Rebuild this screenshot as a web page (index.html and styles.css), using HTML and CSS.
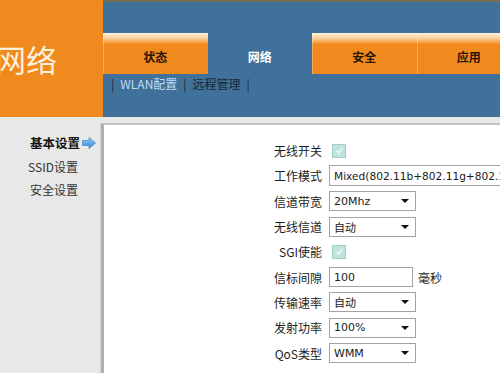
FILE: index.html
```html
<!DOCTYPE html>
<html lang="zh">
<head>
<meta charset="utf-8">
<title>网络</title>
<link rel="stylesheet" href="styles.css">
</head>
<body>
<div class="page">
  <header class="header">
    <div class="logo"><span class="logo-text">网络</span></div>
    <div class="nav">
      <div class="tabs">
        <div class="tab"><span>状态</span></div>
        <div class="tab active"><span>网络</span></div>
        <div class="tab"><span>安全</span></div>
        <div class="tab"><span>应用</span></div>
      </div>
      <div class="subnav">
        <span class="pipe">|</span><span class="sub current">WLAN配置</span><span class="pipe">|</span><span class="sub">远程管理</span><span class="pipe">|</span>
      </div>
    </div>
  </header>
  <div class="main">
    <aside class="sidebar">
      <div class="side-item selected">基本设置<svg class="arrow" width="14" height="12" viewBox="0 0 14 12"><defs><linearGradient id="ag" x1="0" y1="0" x2="0" y2="1"><stop offset="0" stop-color="#9fd0f5"/><stop offset="1" stop-color="#2a86d8"/></linearGradient></defs><path d="M0.5 3.5 H7 V0.5 L13.5 6 L7 11.5 V8.5 H0.5 Z" fill="url(#ag)" stroke="#3b8fd6" stroke-width="0.8" stroke-linejoin="round"/></svg></div>
      <div class="side-item">SSID设置</div>
      <div class="side-item">安全设置</div>
    </aside>
    <section class="content">
      <div class="form">
        <div class="label">无线开关</div>
        <div class="ctrl"><span class="check"><svg width="9" height="9" viewBox="0 0 9 9"><path d="M1.5 4.8 L3.6 7 L7.6 1.8" fill="none" stroke="#eefaf8" stroke-width="1.4"/></svg></span></div>

        <div class="label">工作模式</div>
        <div class="ctrl"><span class="box wide">Mixed(802.11b+802.11g+802.11n)</span></div>

        <div class="label">信道带宽</div>
        <div class="ctrl"><span class="box select">20Mhz<i class="caret"></i></span></div>

        <div class="label">无线信道</div>
        <div class="ctrl"><span class="box select">自动<i class="caret"></i></span></div>

        <div class="label">SGI使能</div>
        <div class="ctrl"><span class="check"><svg width="9" height="9" viewBox="0 0 9 9"><path d="M1.5 4.8 L3.6 7 L7.6 1.8" fill="none" stroke="#eefaf8" stroke-width="1.4"/></svg></span></div>

        <div class="label">信标间隙</div>
        <div class="ctrl"><span class="box text">100</span><span class="unit">毫秒</span></div>

        <div class="label">传输速率</div>
        <div class="ctrl"><span class="box select">自动<i class="caret"></i></span></div>

        <div class="label">发射功率</div>
        <div class="ctrl"><span class="box select">100%<i class="caret"></i></span></div>

        <div class="label">QoS类型</div>
        <div class="ctrl"><span class="box select">WMM<i class="caret"></i></span></div>
      </div>
    </section>
  </div>
</div>
</body>
</html>
```
FILE: styles.css
```css
html, body {
  margin: 0;
  padding: 0;
}
body {
  width: 500px;
  height: 373px;
  overflow: hidden;
  font-family: "Noto Sans CJK SC", "Noto Sans", sans-serif;
  font-size: 12px;
  background: #e8e8e8;
}
.page {
  width: 500px;
  height: 373px;
  display: flex;
  flex-direction: column;
}
.header {
  display: flex;
  height: 117px;
  flex: none;
}
.logo {
  width: 103px;
  background: #f08a1e;
  overflow: hidden;
  display: flex;
  align-items: center;
}
.logo-text {
  font-size: 31px;
  color: #fdf0dc;
  margin-left: -5px;
  line-height: 1;
  white-space: nowrap;
}
.nav {
  flex: 1;
  background: #40719a;
  border-top: 2px solid #7b6e58;
  padding-top: 31px;
  overflow: hidden;
}
.tabs {
  display: flex;
  height: 41px;
}
.tab {
  width: 104.5px;
  flex: none;
  display: flex;
  align-items: center;
  justify-content: center;
  padding-top: 6px;
  box-sizing: border-box;
  background: linear-gradient(to bottom, #fff1da 0, #fbd19c 5px, #f6a650 9px, #f08a1e 11px, #f08a1e 100%);
  font-weight: bold;
  color: #2a1606;
  font-size: 12px;
  box-shadow: inset 1px 0 0 rgba(255,240,220,0.35);
}
.tab.active {
  background: none;
  box-shadow: none;
  color: #ffffff;
}
.subnav {
  height: 20px;
  line-height: 20px;
  padding-left: 5px;
  display: flex;
  font-size: 12px;
  white-space: nowrap;
}
.pipe {
  color: #1a2632;
  padding: 0 3px;
}
.sub {
  color: #1b2633;
  padding: 0 3px;
}
.sub.current {
  color: #bfdcf2;
}
.main {
  flex: 1;
  display: flex;
  padding-top: 6px;
  min-height: 0;
}
.sidebar {
  width: 101px;
  flex: none;
  padding-top: 8px;
  box-sizing: border-box;
}
.side-item {
  height: 23.5px;
  display: flex;
  align-items: center;
  justify-content: flex-end;
  padding-right: 23px;
  color: #333333;
  font-size: 12px;
  white-space: nowrap;
}
.side-item.selected {
  padding-right: 5px;
  font-weight: bold;
  color: #151515;
  font-size: 12.5px;
}
.arrow {
  margin-left: 2px;
  flex: none;
}
.content {
  flex: 1;
  background: #ffffff;
  border-top: 2px solid #c2c2c2;
  border-left: 3px solid #b0b0b0;
  box-shadow: -1px 0 0 #d4d4d4;
  overflow: hidden;
}
.form {
  display: grid;
  grid-template-columns: 218px 1fr;
  column-gap: 7px;
  grid-auto-rows: 25.3px;
  align-items: center;
  padding-top: 13px;
}
.label {
  text-align: right;
  color: #1c1c1c;
  font-size: 12px;
  white-space: nowrap;
}
.ctrl {
  display: flex;
  align-items: center;
  white-space: nowrap;
}
.check {
  width: 12px;
  height: 12px;
  margin-left: 3px;
  background: #bfe4dd;
  border: 1px solid #a4cec8;
  display: flex;
  align-items: center;
  justify-content: center;
}
.box {
  display: flex;
  align-items: center;
  box-sizing: border-box;
  height: 20px;
  border: 1px solid #a3a3a3;
  background: #ffffff;
  padding-left: 4px;
  font-family: "DejaVu Sans", "Noto Sans CJK SC", sans-serif;
  font-size: 11px;
  color: #202020;
  position: relative;
}
.box.wide {
  width: 220px;
  height: 21px;
  overflow: hidden;
  font-size: 10.6px;
}
.box.select {
  width: 87px;
}
.box.text {
  width: 84px;
}
.caret {
  position: absolute;
  right: 6px;
  top: 7px;
  width: 0;
  height: 0;
  border-left: 4px solid transparent;
  border-right: 4px solid transparent;
  border-top: 4px solid #111111;
}
.unit {
  margin-left: 5px;
  color: #1c1c1c;
}
```
